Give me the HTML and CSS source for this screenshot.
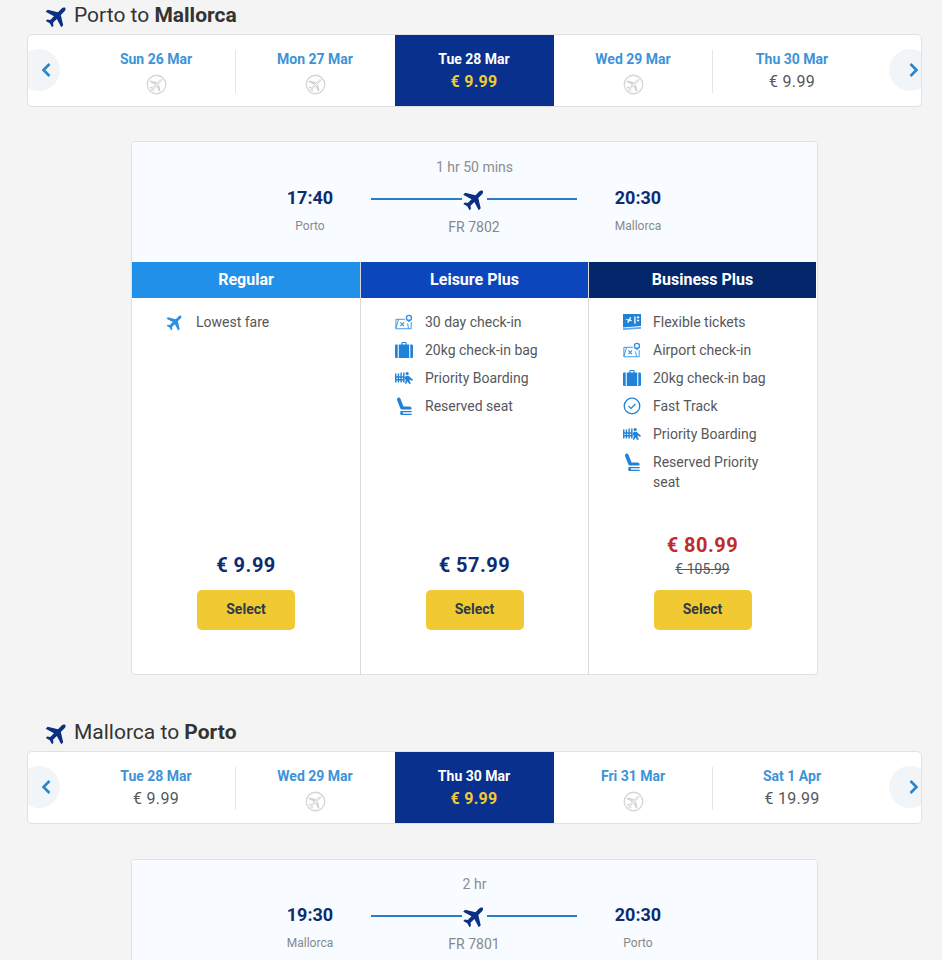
FILE: index.html
```html
<!DOCTYPE html>
<html lang="en">
<head>
<meta charset="utf-8">
<title>Flights</title>
<link rel="stylesheet" href="styles.css">
</head>
<body>
<svg class="defs" width="0" height="0" aria-hidden="true">
  <defs>
    <symbol id="plane" viewBox="0 0 24 24"><path transform="rotate(45 12 12)" d="M23 17v-2.800l-9-5.600V3C14 1.900 13.100.5 12 .5S10 1.900 10 3v5.600l-9 5.600V17l9-2.800v5.400l-2.400 1.800v2l4.400-1.200 4.400 1.200v-2L14 19.600v-5.400z"/></symbol>
    <symbol id="noflight" viewBox="0 0 24 24"><circle cx="12" cy="12" r="10.600" fill="none" stroke="#d6d6d6" stroke-width="1.500"/><path fill="#d4d4d4" transform="translate(3.400 3.400) scale(.72) rotate(45 12 12)" d="M23 17v-2.800l-9-5.600V3C14 1.900 13.100.5 12 .5S10 1.900 10 3v5.600l-9 5.600V17l9-2.800v5.400l-2.400 1.800v2l4.400-1.200 4.400 1.200v-2L14 19.600v-5.400z"/><path d="M6 19 19 6" stroke="#fff" stroke-width="2.800"/><path d="M6 19 19 6" stroke="#d0d0d0" stroke-width="1.200"/></symbol>
    <symbol id="map" viewBox="0 0 20 18"><path d="M1 6h10M1 6v10.500h17V9M1 16l3-10M15 16.500l-1-6" fill="none" stroke="#2f8fe0" stroke-width="1"/><path d="M6 9.500l4 4m0-4l-4 4" stroke="#2f8fe0" stroke-width="1.200"/><circle cx="15.500" cy="4.500" r="2.800" fill="none" stroke="#2f8fe0" stroke-width="1.500"/><path d="M13.500 6.500l2 3 2-3" fill="#2f8fe0"/></symbol>
    <symbol id="bag" viewBox="0 0 20 18"><path fill="#2083d8" d="M7 3V1.500C7 .7 7.700 0 8.500 0h3c.8 0 1.500.7 1.500 1.500V3h-1.300V1.300H8.300V3zM1 3h2v15H1.500C.7 18 0 17.300 0 16.500v-12C0 3.700.5 3 1 3zm3.200 0h11.600v15H4.200zM17 3h1.500c.8 0 1.500.7 1.500 1.500v12c0 .8-.7 1.500-1.500 1.500H17z"/></symbol>
    <symbol id="boarding" viewBox="0 0 20 14"><g fill="#2083d8"><path d="M0 2h1.600v10H0zM3 2h1.600v10H3zM6 1h1.600v11H6zM9 1h1.600v11H9z"/><path d="M0 5h10.500v1.800H0zM0 8h10.500v1.800H0z"/><circle cx="13.500" cy="2" r="1.800"/><path d="M12 4.500h3l5 4.500-1.200 1.400-2.600-1.900v1.500l1.500 3.500h-2.200l-1.500-3-1.500 3H11l1-4.500-1.500-1.500z"/></g></symbol>
    <symbol id="seat" viewBox="0 0 18 20"><g fill="#2083d8"><path d="M2 1c1-.8 2.500-.5 3 .8l3.500 8.700H15c1.500 0 2.500 1 2.500 2s-.6 1.500-1.500 1.500H7c-1 0-1.800-.5-2.200-1.500L1.500 4C1 2.800 1.200 1.700 2 1z"/><path d="M5 15.500h12.500V17H7.500L8 18.500h9.500V20H6.500C5.500 20 5 19.300 4.800 18.500z"/></g></symbol>
    <symbol id="clock" viewBox="0 0 18 18"><circle cx="9" cy="9" r="7.800" fill="none" stroke="#2083d8" stroke-width="1.300"/><path d="M5.500 9l2.500 2.500 4.500-4.500" fill="none" stroke="#2083d8" stroke-width="1.200"/></symbol>
    <symbol id="ticket" viewBox="0 0 20 18"><path fill="#2083d8" d="M0 0h20v13.500L0 15z"/><path fill="#fff" d="M2 6h4.500l1.500-2.500 1 .3-.7 2.700 1.700.8-.4.9-2-.5-2 2.300-1-.3 1-2.500zM12.500 3h1.500v8h-1.500zM15.500 3h2.500v1.800h-2.500zM15.500 6.500h2.500v1.800h-2.500z"/><path fill="#2083d8" d="M0 16 20 14.500V16.500L0 18z" opacity=".7"/></symbol>
  </defs>
</svg>

<main class="page">
  <section class="leg">
    <h2 class="leg-title"><svg class="leg-icon"><use href="#plane"/></svg><span>Porto to <b>Mallorca</b></span></h2>
    <div class="dates">
      <button class="arrow arrow-left" type="button" aria-label="Previous"><svg viewBox="0 0 12 16"><path d="M9.500 2 3.500 8l6 6"/></svg></button>
      <div class="date"><span class="date-label">Sun 26 Mar</span><svg class="no-flight"><use href="#noflight"/></svg></div>
      <div class="date"><span class="date-label">Mon 27 Mar</span><svg class="no-flight"><use href="#noflight"/></svg></div>
      <div class="date active"><span class="date-label">Tue 28 Mar</span><span class="date-price">€ 9.99</span></div>
      <div class="date"><span class="date-label">Wed 29 Mar</span><svg class="no-flight"><use href="#noflight"/></svg></div>
      <div class="date"><span class="date-label">Thu 30 Mar</span><span class="date-price">€ 9.99</span></div>
      <button class="arrow arrow-right" type="button" aria-label="Next"><svg viewBox="0 0 12 16"><path d="M2.500 2l6 6-6 6"/></svg></button>
    </div>
    <div class="card">
      <div class="flight">
        <div class="duration">1 hr 50 mins</div>
        <div class="route">
          <div class="stop"><div class="time">17:40</div><div class="place">Porto</div></div>
          <div class="path">
            <div class="line"><svg class="line-plane"><use href="#plane"/></svg></div>
            <div class="number">FR 7802</div>
          </div>
          <div class="stop"><div class="time">20:30</div><div class="place">Mallorca</div></div>
        </div>
      </div>
      <div class="fares">
        <div class="fare">
          <h3 class="fare-name regular">Regular</h3>
          <div class="fare-body">
            <ul class="perks">
              <li><svg class="perk-icon plane-blue"><use href="#plane"/></svg>Lowest fare</li>
            </ul>
            <div class="price">€ 9.99</div>
            <button class="select" type="button">Select</button>
          </div>
        </div>
        <div class="fare">
          <h3 class="fare-name leisure">Leisure Plus</h3>
          <div class="fare-body">
            <ul class="perks">
              <li><svg class="perk-icon"><use href="#map"/></svg>30 day check-in</li>
              <li><svg class="perk-icon"><use href="#bag"/></svg>20kg check-in bag</li>
              <li><svg class="perk-icon"><use href="#boarding"/></svg>Priority Boarding</li>
              <li><svg class="perk-icon"><use href="#seat"/></svg>Reserved seat</li>
            </ul>
            <div class="price">€ 57.99</div>
            <button class="select" type="button">Select</button>
          </div>
        </div>
        <div class="fare">
          <h3 class="fare-name business">Business Plus</h3>
          <div class="fare-body">
            <ul class="perks">
              <li><svg class="perk-icon"><use href="#ticket"/></svg>Flexible tickets</li>
              <li><svg class="perk-icon"><use href="#map"/></svg>Airport check-in</li>
              <li><svg class="perk-icon"><use href="#bag"/></svg>20kg check-in bag</li>
              <li><svg class="perk-icon"><use href="#clock"/></svg>Fast Track</li>
              <li><svg class="perk-icon"><use href="#boarding"/></svg>Priority Boarding</li>
              <li><svg class="perk-icon"><use href="#seat"/></svg>Reserved Priority seat</li>
            </ul>
            <div class="price sale">€ 80.99</div>
            <div class="old-price">€ 105.99</div>
            <button class="select" type="button">Select</button>
          </div>
        </div>
      </div>
    </div>
  </section>

  <section class="leg">
    <h2 class="leg-title"><svg class="leg-icon"><use href="#plane"/></svg><span>Mallorca to <b>Porto</b></span></h2>
    <div class="dates">
      <button class="arrow arrow-left" type="button" aria-label="Previous"><svg viewBox="0 0 12 16"><path d="M9.500 2 3.500 8l6 6"/></svg></button>
      <div class="date"><span class="date-label">Tue 28 Mar</span><span class="date-price">€ 9.99</span></div>
      <div class="date"><span class="date-label">Wed 29 Mar</span><svg class="no-flight"><use href="#noflight"/></svg></div>
      <div class="date active"><span class="date-label">Thu 30 Mar</span><span class="date-price">€ 9.99</span></div>
      <div class="date"><span class="date-label">Fri 31 Mar</span><svg class="no-flight"><use href="#noflight"/></svg></div>
      <div class="date"><span class="date-label">Sat 1 Apr</span><span class="date-price">€ 19.99</span></div>
      <button class="arrow arrow-right" type="button" aria-label="Next"><svg viewBox="0 0 12 16"><path d="M2.500 2l6 6-6 6"/></svg></button>
    </div>
    <div class="card">
      <div class="flight">
        <div class="duration">2 hr</div>
        <div class="route">
          <div class="stop"><div class="time">19:30</div><div class="place">Mallorca</div></div>
          <div class="path">
            <div class="line"><svg class="line-plane"><use href="#plane"/></svg></div>
            <div class="number">FR 7801</div>
          </div>
          <div class="stop"><div class="time">20:30</div><div class="place">Porto</div></div>
        </div>
      </div>
    </div>
  </section>
</main>
</body>
</html>
```
FILE: styles.css
```css
* { box-sizing: border-box; }
html, body { margin: 0; height: 960px; overflow: hidden; }
body { background: #f4f4f4; font-family: Roboto, "Liberation Sans", sans-serif; color: #4c4f52; }
.defs { display: block; height: 0; }
.page { height: 960px; overflow: hidden; }
.leg { padding: 0 20px 0 27px; margin-bottom: 45px; }
.leg-title { display: flex; align-items: center; gap: 5px; height: 24px; margin: 3px 0 7px 18px; font-size: 21px; font-weight: 400; color: #333; }
.leg-title b { font-weight: 700; }
.leg-icon { width: 24px; height: 24px; fill: #0b2f83; margin-top: 1px; }

.dates { position: relative; display: grid; grid-template-columns: repeat(5, 159px); height: 73px; padding: 0 49px; background: #fff; border: 1px solid #dfe1e3; border-radius: 5px; overflow: hidden; }
.date { display: flex; flex-direction: column; align-items: center; padding: 16px 1px 0 0; gap: 3px; position: relative; }
.date + .date::before { content: ""; position: absolute; left: -1px; top: 15px; bottom: 13px; width: 1px; background: #e3e5e7; }
.date:nth-child(5)::before, .date.active::before { display: none; }
.date-label { font-size: 14px; line-height: 17px; font-weight: 700; color: #3d93d8; }
.date-price { font-size: 16px; line-height: 22px; letter-spacing: .3px; color: #55585b; }
.no-flight { width: 21px; height: 21px; margin-top: 3px; }
.date.active { background: #09308c; margin-top: -1px; margin-bottom: -1px; padding-top: 17px; }
.date.active .date-label { color: #fff; }
.date.active .date-price { color: #f1c933; font-weight: 700; }
.arrow { position: absolute; top: 14px; width: 42px; height: 42px; padding: 0; border: 0; border-radius: 50%; background: #f2f5f7; display: flex; align-items: center; justify-content: center; }
.arrow svg { width: 12px; height: 16px; fill: none; stroke: #2a86cf; stroke-width: 2.600; }
.arrow-left { left: -10px; padding-left: 14px; }
.arrow-right { right: -10px; padding-left: 8px; }

.card { width: 687px; margin: 34px 0 0 104px; background: #fff; border: 1px solid #dfe1e3; border-radius: 4px; overflow: hidden; }
.leg + .leg .card { margin-top: 35px; }
.leg + .leg .flight { padding-top: 14px; }
.flight { height: 120px; padding-top: 15px; background: #f8fbff; }
.duration { text-align: center; font-size: 14px; line-height: 20px; color: #8a8e92; }
.route { display: flex; justify-content: center; gap: 11px; margin-top: 9px; padding-right: 1px; }
.stop { width: 100px; text-align: center; }
.time { font-size: 18px; line-height: 24px; font-weight: 700; color: #0d2c72; }
.place { font-size: 12px; line-height: 16px; margin-top: 8px; color: #85898d; }
.path { width: 206px; padding-top: 1px; text-align: center; }
.line { height: 24px; display: flex; align-items: center; justify-content: center; background: linear-gradient(#2a7cc4, #2a7cc4) center / 100% 2px no-repeat; }
.line-plane { width: 25px; height: 24px; background: #f8fbff; fill: #0b2f83; }
.number { font-size: 14px; line-height: 20px; margin-top: 6px; color: #85898d; }

.fares { display: grid; grid-template-columns: repeat(3, 228px); }
.fare { display: flex; flex-direction: column; height: 412px; border-left: 1px solid #d8dadc; }
.fare:first-child { border-left: 0; }
.fare-name { height: 36px; margin: 0; font-size: 16px; line-height: 35px; font-weight: 700; text-align: center; color: #fff; }
.regular { background: #2190e8; }
.leisure { background: #0c46bd; }
.business { background: #04276b; }
.fare-body { flex: 1; display: flex; flex-direction: column; align-items: center; padding-bottom: 44px; }
.perks { list-style: none; width: 100%; margin: 14px 0 0; padding: 0 45px 0 34px; flex: 1; }
.perks li { position: relative; padding-left: 30px; margin-bottom: 8px; font-size: 14px; line-height: 20px; color: #55585b; }
.perk-icon { position: absolute; left: 0; top: 1px; width: 18px; height: 18px; }
.plane-blue { fill: #2f8fe0; }
.price { font-size: 20px; line-height: 26px; font-weight: 700; letter-spacing: .5px; color: #0d2c72; }
.price.sale { color: #c02b2b; margin-bottom: 1px; }
.old-price { font-size: 14px; line-height: 20px; color: #55585b; text-decoration: line-through; margin-bottom: -1px; }
.select { width: 98px; height: 40px; margin-top: 12px; padding-bottom: 3px; border: 0; border-radius: 5px; background: #f1c933; font: 700 14px/20px Roboto, "Liberation Sans", sans-serif; color: #2c3a4a; }
```
